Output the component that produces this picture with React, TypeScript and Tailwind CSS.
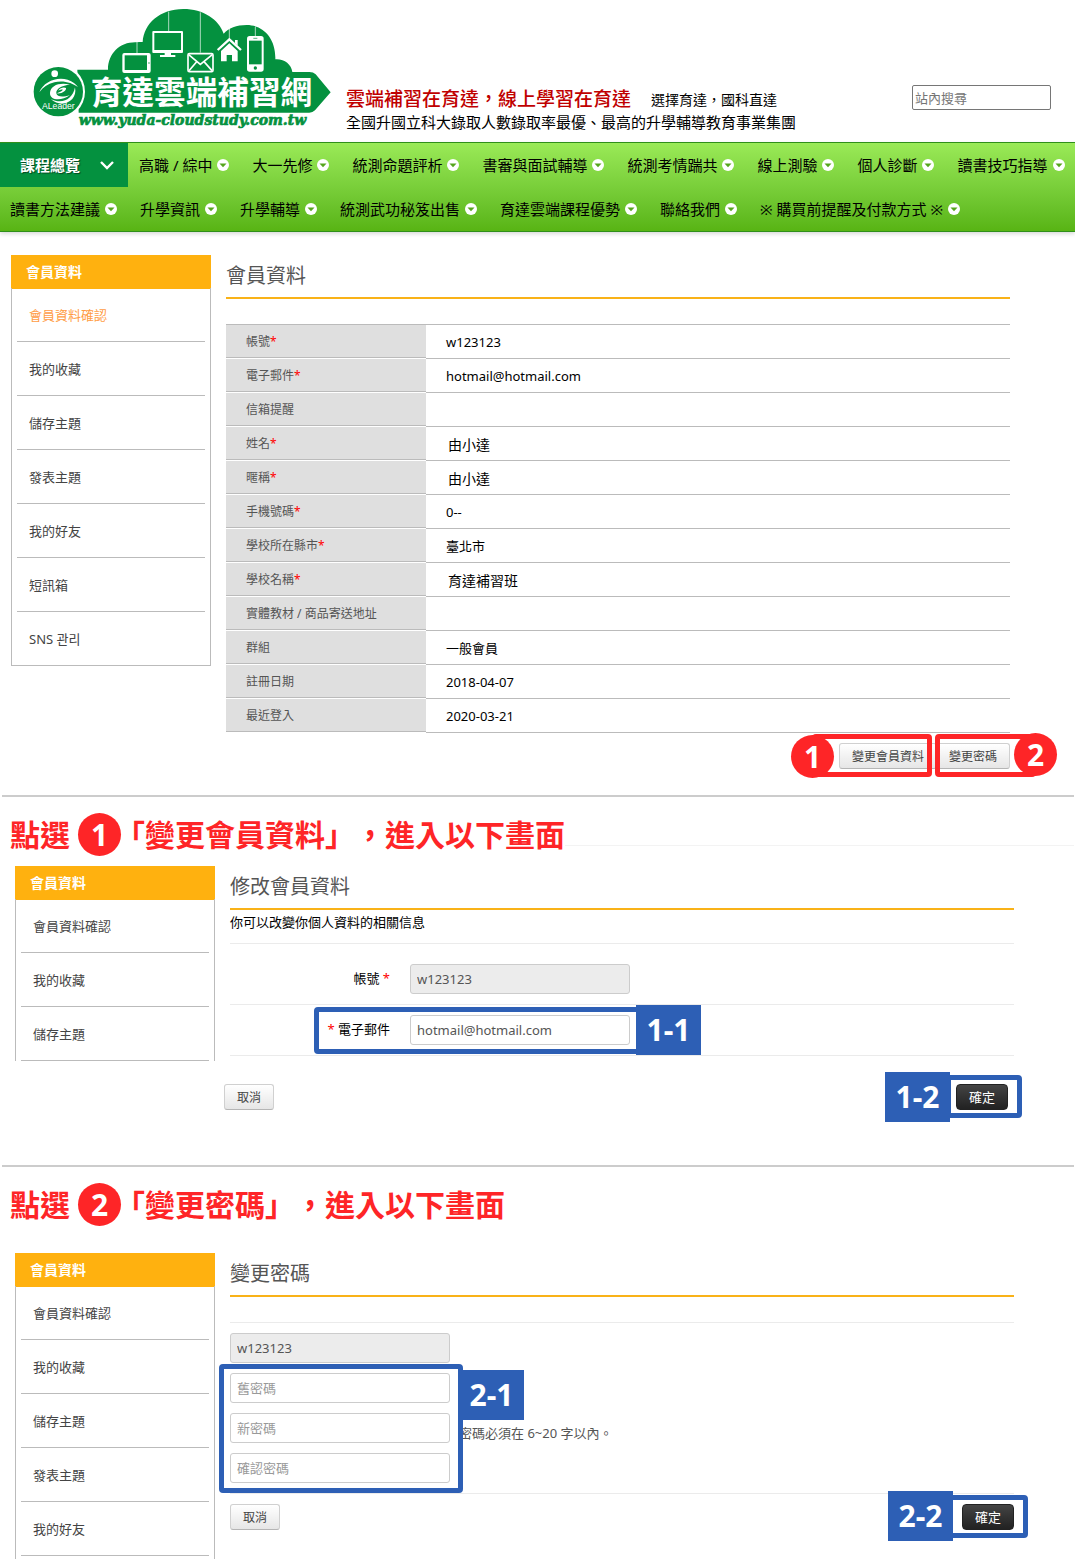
import type { ReactNode } from 'react';
import clsx from 'clsx';

const NAV_TOP = [
  '高職 / 綜中',
  '大一先修',
  '統測命題評析',
  '書審與面試輔導',
  '統測考情踹共',
  '線上測驗',
  '個人診斷',
  '讀書技巧指導',
];

const NAV_BOTTOM = [
  '讀書方法建議',
  '升學資訊',
  '升學輔導',
  '統測武功秘笈出售',
  '育達雲端課程優勢',
  '聯絡我們',
  '※ 購買前提醒及付款方式 ※',
];

const MENU = ['會員資料確認', '我的收藏', '儲存主題', '發表主題', '我的好友', '短訊箱', 'SNS 관리'];

interface ProfileRow {
  label: string;
  value: string;
  required?: boolean;
  large?: boolean;
}

const PROFILE: ProfileRow[] = [
  { label: '帳號', value: 'w123123', required: true },
  { label: '電子郵件', value: 'hotmail@hotmail.com', required: true },
  { label: '信箱提醒', value: '' },
  { label: '姓名', value: '由小達', required: true, large: true },
  { label: '暱稱', value: '由小達', required: true, large: true },
  { label: '手機號碼', value: '0--', required: true },
  { label: '學校所在縣市', value: '臺北市', required: true },
  { label: '學校名稱', value: '育達補習班', required: true, large: true },
  { label: '實體教材 / 商品寄送地址', value: '' },
  { label: '群組', value: '一般會員' },
  { label: '註冊日期', value: '2018-04-07' },
  { label: '最近登入', value: '2020-03-21' },
];

function Logo() {
  return (
    <svg viewBox="0 0 990 420" className="h-[140px] w-[330px] shrink-0" role="img" aria-label="育達雲端補習網">
      <path
        fill="#04913f"
        d="M172 209H264C264 160 300 127 345 127Q357 125 368 126C372 70 420 27 490 27C550 27 596 58 611 101C625 84 650 75 680 75C730 75 768 115 766 178C792 176 814 192 817 216H868Q880 216 887 223L932 277L885 331Q878 338 868 338H176Z"
      />
      <circle cx="112" cy="275" r="83" fill="#fff" />
      <circle cx="115" cy="275" r="74" fill="#04913f" />

      {/* emblem */}
      <g fill="#fff">
        <circle cx="104" cy="221" r="10" />
        <path d="M58 277C70 245 110 229 143 239C158 244 168 252 174 262C157 248 128 240 103 247C83 252 69 262 58 277Z" />
        <path d="M150 254C120 246 91 256 90 279C89 300 122 306 150 285C131 292 111 292 109 280C107 266 126 256 150 254Z" />
        <path d="M110 280C126 282 140 272 138 264C132 260 119 264 115 272C124 268 129 268 128 270C125 274 118 277 110 280Z" />
        <path d="M92 297C126 314 158 299 165 262C174 303 126 328 92 297Z" />
        <text x="66" y="327" fontSize="26" fontFamily="Liberation Sans, Arial, sans-serif">ALeader</text>
      </g>

      {/* things hanging inside the cloud */}
      <g stroke="#fff" strokeWidth="2">
        <path d="M351 126V160M446 35V94M541 37V158M628 86V116M706 80V108" />
      </g>
      <rect x="307" y="159" width="85" height="60" rx="6" fill="#fff" />
      <rect x="314" y="166" width="67" height="44" fill="#04913f" />
      <circle cx="387" cy="189" r="2" fill="#04913f" />
      <rect x="397" y="93" width="92" height="66" rx="3" fill="#fff" />
      <rect x="403" y="99" width="80" height="51" fill="#04913f" />
      <path d="M434 158H453V165H466V171H420V165H434Z" fill="#fff" />
      <g fill="none" stroke="#fff" strokeWidth="5">
        <rect x="504" y="161" width="75" height="54" rx="4" />
        <path d="M506 164L541 193L577 164M507 212L530 185M576 212L552 185" />
        <path d="M593 150L628 118L663 150" strokeWidth="7" />
      </g>
      <path d="M603 153L628 130L653 153V184H636V165H620V184H603ZM645 120H653V137L645 130Z" fill="#fff" />
      <rect x="681" y="108" width="50" height="107" rx="8" fill="#fff" />
      <rect x="687" y="122" width="38" height="71" fill="#04913f" />
      <circle cx="706" cy="204" r="5" fill="#04913f" />
      <path d="M700 115H712" stroke="#04913f" strokeWidth="2" />

      <text x="212" y="313" fontSize="95" fontWeight="700" fill="#fff" fontFamily="Noto Sans CJK TC, sans-serif">
        育達雲端補習網
      </text>
      <text
        x="176"
        y="374"
        fontSize="42"
        fontWeight="700"
        fontStyle="italic"
        fill="#04913f"
        stroke="#04913f"
        strokeWidth="2"
        fontFamily="DejaVu Serif, serif"
      >
        www.yuda-cloudstudy.com.tw
      </text>
    </svg>
  );
}

function NavItem({ label }: { label: string }) {
  return (
    <li>
      <a href="#" className="flex h-[44px] items-center gap-[5px] whitespace-nowrap">
        {label}
        <svg viewBox="0 0 12 12" className="size-3 shrink-0" aria-hidden="true">
          <circle cx="6" cy="6" r="6" fill="#fff" />
          <path d="M2.5 4.5h7L6 8.2z" fill="#55a51c" />
        </svg>
      </a>
    </li>
  );
}

function Header() {
  return (
    <header>
      <div className="flex h-[142px] pl-5">
        <Logo />
        <div className="flex-1 pt-[84px] pr-6 -ml-1">
          <div className="flex items-start justify-between">
            <p className="flex h-[26px] items-center gap-5 pt-[4px] leading-[30px] whitespace-nowrap">
              <span className="text-[19px] font-medium text-[#c00000]">雲端補習在育達，線上學習在育達</span>
              <span className="pt-[2px] text-[14px]">選擇育達，國科直達</span>
            </p>
            <input
              type="search"
              aria-label="站內搜尋"
              placeholder="站內搜尋"
              className="mt-px h-[25px] w-[139px] rounded-[2px] border border-[#767676] px-[2px] text-[13px] placeholder:text-[#757575]"
            />
          </div>
          <p className="text-[15px] leading-[24px] whitespace-nowrap">
            全國升國立科大錄取人數錄取率最優、最高的升學輔導教育事業集團
          </p>
        </div>
      </div>
      <nav className="overflow-hidden border-y border-[#2f8f1a] bg-linear-to-b from-[#9aea57] to-[#58b413] text-[15px] shadow-[0_2px_4px_rgba(0,0,0,0.15)]">
        <div className="flex">
          <button
            type="button"
            className="flex h-[44px] w-32 shrink-0 items-center justify-between bg-[#04913f] pr-[14px] pl-5 font-bold text-white [text-shadow:1px_1px_1px_rgba(0,0,0,0.5)]"
          >
            課程總覽
            <svg viewBox="0 0 14 9" className="h-[9px] w-[14px]" fill="none" stroke="#fff" strokeWidth="2.4" aria-hidden="true">
              <path d="M1 1l6 6 6-6" />
            </svg>
          </button>
          <ul className="flex gap-[23px] pl-[11px]">
            {NAV_TOP.map((label) => (
              <NavItem key={label} label={label} />
            ))}
          </ul>
        </div>
        <ul className="flex gap-[23px] pl-[10px]">
          {NAV_BOTTOM.map((label) => (
            <NavItem key={label} label={label} />
          ))}
        </ul>
      </nav>
    </header>
  );
}

interface SidebarProps {
  items: string[];
  active?: string;
  closed?: boolean;
  className?: string;
}

function Sidebar({ items, active, closed, className }: SidebarProps) {
  return (
    <aside className={clsx('w-[200px] shrink-0 self-start', className)}>
      <h3 className="h-[34px] bg-[#ffb10f] pl-[15px] text-[14px] leading-[34px] font-bold text-white">會員資料</h3>
      <ul className={clsx('border-x border-[#bbb] px-[5px]', closed && 'border-b')}>
        {items.map((item, i) => (
          <li
            key={item}
            className={clsx(
              'pt-[2px] pl-3 text-[13px] leading-[51px]',
              !(closed && i === items.length - 1) && 'border-b border-[#bbb]',
              i === 0 && '-mt-px',
              item === active ? 'text-[#ff9c45]' : 'text-[#444]',
            )}
          >
            <a href="#">{item}</a>
          </li>
        ))}
      </ul>
    </aside>
  );
}

function Title({ children }: { children: ReactNode }) {
  return (
    <h2 className="h-[44px] border-b-2 border-[#f9b218] text-[20px] leading-[41px] text-[#555]">{children}</h2>
  );
}

function Dot({ n, className }: { n: number; className?: string }) {
  return (
    <span
      className={clsx(
        'flex size-[43px] shrink-0 items-center justify-center rounded-full bg-[#fe2527] text-[30px] leading-none font-bold text-white',
        className,
      )}
    >
      {n}
    </span>
  );
}

function Tag({ children, className }: { children: ReactNode; className?: string }) {
  return (
    <span
      className={clsx(
        'absolute flex h-[50px] w-[65px] items-center justify-center bg-[#2d5fb5] text-[30px] leading-none font-bold text-white',
        className,
      )}
    >
      {children}
    </span>
  );
}

function StepHeading({ n, target, line }: { n: number; target: string; line?: boolean }) {
  return (
    <div className="mr-px ml-[2px] border-t-2 border-[#ccc] pt-4 pl-2">
      <h2 className="flex h-[43px] items-center text-[30px] leading-[43px] font-bold whitespace-nowrap text-[#fe2527] [text-spacing-trim:space-all]">
        點選
        <Dot n={n} className="ml-2 -mr-[6px]" />
        <span>「{target}」，進入以下畫面</span>
        {line && <span className="mb-[10px] h-px flex-1 self-end bg-[#f3f3f3]" />}
      </h2>
    </div>
  );
}

function LightButton({ children }: { children: ReactNode }) {
  return (
    <button
      type="button"
      className="h-[26px] rounded-[3px] border border-[#d0d0d0] border-b-[#b5b5b5] bg-linear-to-b from-white to-[#e6e6e6] px-3 pt-[2px] text-[12px] leading-[22px] text-[#444]"
    >
      {children}
    </button>
  );
}

function ConfirmButton({ children }: { children: ReactNode }) {
  return (
    <span className="relative">
      <button
        type="submit"
        className="h-[26px] rounded-[4px] border border-[#222] bg-linear-to-b from-[#444] to-[#222] px-3 text-[13px] leading-[24px] text-white"
      >
        確定
      </button>
      {children}
    </span>
  );
}

const inputClass =
  'h-[30px] w-[220px] rounded-[3px] border border-[#ccc] px-[6px] text-[13px] text-[#555] placeholder:text-[#999] read-only:bg-[#ececec]';

export default function App() {
  return (
    <div className="min-h-screen overflow-hidden bg-white font-['Noto_Sans','Noto_Sans_CJK_TC',sans-serif] text-black">
      <Header />

      {/* member data */}
      <section className="flex gap-[15px] pt-[23px] pr-[65px] pb-[26px] pl-[11px]">
        <Sidebar items={MENU} active="會員資料確認" closed />
        <div className="min-w-0 flex-1">
          <Title>會員資料</Title>
          <table className="mt-[25px] w-full table-fixed border-separate border-spacing-0 border-t border-[#bbb] text-left">
            <tbody>
              {PROFILE.map((row) => (
                <tr key={row.label}>
                  <th
                    scope="row"
                    className="h-[34px] w-[200px] border-b border-white bg-[#dfdfdf] pl-5 text-[12px] leading-[32px] font-normal text-[#555] shadow-[inset_0_-1px_0_#bbb]"
                  >
                    {row.label}
                    {row.required && <span className="text-[#f00]">*</span>}
                  </th>
                  <td
                    className={clsx(
                      'h-[34px] border-b border-[#bbb] pt-[2px] leading-[31px]',
                      row.large ? 'pl-[22px] text-[14px]' : 'pl-5 text-[13px]',
                    )}
                  >
                    {row.value}
                  </td>
                </tr>
              ))}
            </tbody>
          </table>
          <div className="mt-[10px] flex justify-end">
            <span className="relative -mr-px flex">
              <LightButton>變更會員資料</LightButton>
              <span className="pointer-events-none absolute -top-[9px] right-[5px] -bottom-[8px] -left-[27px] rounded-[4px] border-[5px] border-[#fe2527]" />
              <Dot n={1} className="absolute -top-[8px] -left-[48px]" />
            </span>
            <span className="relative flex">
              <LightButton>變更密碼</LightButton>
              <span className="pointer-events-none absolute -top-[9px] -right-[26px] -bottom-[8px] -left-px rounded-[4px] border-[5px] border-[#fe2527]" />
              <Dot n={2} className="absolute -top-[10px] -right-[47px]" />
            </span>
          </div>
        </div>
      </section>

      {/* step 1 */}
      <StepHeading n={1} target="變更會員資料" line />
      <section className="flex gap-[15px] pt-[10px] pr-[61px] pb-[55px] pl-[15px]">
        <Sidebar items={MENU.slice(0, 3)} />
        <form className="min-w-0 flex-1" onSubmit={(e) => e.preventDefault()}>
          <Title>修改會員資料</Title>
          <p className="border-b border-[#ebebeb] pb-[9px] text-[13px] leading-[24px]">你可以改變你個人資料的相關信息</p>
          <div className="flex items-center gap-5 border-b border-[#ebebeb] pt-5 pb-[10px]">
            <label htmlFor="account" className="w-[160px] text-right text-[13px]">
              帳號 <span className="text-[#f00]">*</span>
            </label>
            <input id="account" className={inputClass} value="w123123" readOnly />
          </div>
          <div className="relative flex items-center gap-5 border-b border-[#ebebeb] py-[10px]">
            <label htmlFor="email" className="w-[160px] text-right text-[13px]">
              <span className="text-[#f00]">*</span> 電子郵件
            </label>
            <input id="email" type="email" className={inputClass} defaultValue="hotmail@hotmail.com" />
            <span className="pointer-events-none absolute top-[2px] left-[84px] h-[47px] w-[330px] rounded-[4px] border-[5px] border-[#2d5fb5]" />
            <Tag className="top-0 left-[406px]">1-1</Tag>
          </div>
          <div className="mt-[28px] mr-[6px] -ml-[6px] flex justify-between">
            <LightButton>取消</LightButton>
            <ConfirmButton>
              <span className="pointer-events-none absolute -top-[9px] -right-[14px] h-[43px] w-[76px] rounded-[4px] border-[5px] border-[#2d5fb5]" />
              <Tag className="-top-[12px] right-[58px]">1-2</Tag>
            </ConfirmButton>
          </div>
        </form>
      </section>

      {/* step 2 */}
      <StepHeading n={2} target="變更密碼" />
      <section className="flex gap-[15px] pt-[27px] pr-[61px] pl-[15px]">
        <Sidebar items={MENU.slice(0, 5)} className="[&>ul]:pb-[3px]" />
        <form className="min-w-0 flex-1" onSubmit={(e) => e.preventDefault()}>
          <Title>變更密碼</Title>
          <div className="mt-[25px] flex items-end gap-[9px] border-y border-[#ebebeb] py-[10px]">
            <div className="relative flex flex-col gap-[10px]">
              <input aria-label="帳號" className={inputClass} value="w123123" readOnly />
              <input type="password" aria-label="舊密碼" placeholder="舊密碼" className={inputClass} />
              <input type="password" aria-label="新密碼" placeholder="新密碼" className={inputClass} />
              <input type="password" aria-label="確認密碼" placeholder="確認密碼" className={inputClass} />
              <span className="pointer-events-none absolute top-[31px] -right-[13px] -bottom-[10px] -left-[11px] z-10 rounded-[4px] border-[5px] border-[#2d5fb5]" />
              <Tag className="top-[37px] left-[229px] z-10">2-1</Tag>
            </div>
            <p className="mb-[40px] text-[13px] leading-[20px] text-[#555]">密碼必須在 6~20 字以內。</p>
          </div>
          <div className="mt-[10px] flex justify-between">
            <LightButton>取消</LightButton>
            <ConfirmButton>
              <span className="pointer-events-none absolute -top-[9px] -right-[14px] h-[43px] w-[80px] rounded-[4px] border-[5px] border-[#2d5fb5]" />
              <Tag className="-top-[13px] right-[61px]">2-2</Tag>
            </ConfirmButton>
          </div>
        </form>
      </section>
    </div>
  );
}
